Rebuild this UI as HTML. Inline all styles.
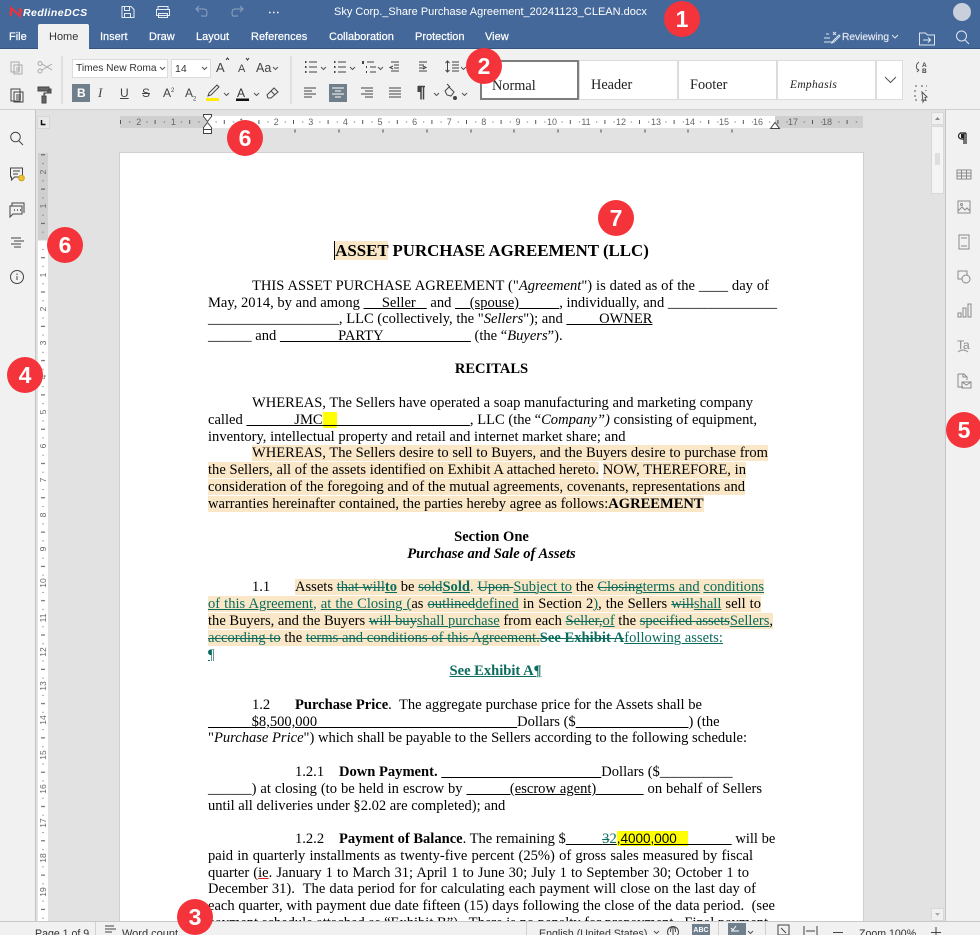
<!DOCTYPE html>
<html><head><meta charset="utf-8"><style>
html,body{margin:0;padding:0}
#a{position:relative;width:980px;height:935px;overflow:hidden;background:#e2e2e2;font-family:"Liberation Sans",sans-serif}
.abs,.t{position:absolute}
.t{white-space:nowrap;line-height:14px}
#top{left:0;top:0;width:980px;height:48px;background:#44689a}
#tb{left:0;top:48px;width:980px;height:62px;background:#f1f1f1;border-top:1px solid #33547f;border-bottom:1px solid #d0d0d0;box-sizing:border-box}
.m{color:#fff;font-size:11px;top:30px;-webkit-text-stroke:.2px #fff}
#ls{left:0;top:110px;width:35px;height:811px;background:#f1f1f1;border-right:1px solid #c4c4c4}
#rs{left:945px;top:110px;width:35px;height:811px;background:#f1f1f1;border-left:1px solid #c4c4c4}
#pg{left:120px;top:153px;width:743px;height:768px;background:#fff;box-shadow:0 0 0 1px #cfcfcf;overflow:hidden}
#st{left:0;top:921px;width:980px;height:14px;background:#f1f1f1;border-top:1px solid #c9c9c9;box-sizing:border-box;font-size:10.6px;color:#333}
.l{position:absolute;white-space:nowrap;font:14.55px/17px "Liberation Serif",serif;color:#000;margin-top:2px}
.j{text-align:justify;text-align-last:justify}
.c{text-align:center;left:88px;width:567px}
.h{background:#f9e7c7}
.k{color:#0b6b5c}
.k s,.k u{text-decoration-thickness:1px}
.y{background:#ffff00}
.bg{position:absolute;width:36px;height:36px;border-radius:50%;background:#f5333a;color:#fff;font:bold 23px/36px "Liberation Sans",sans-serif;text-align:center}
.sty{top:60px;height:40px;box-sizing:border-box;background:#fff;border:1px solid #dcdcdc;font:14.3px/49px "Liberation Serif",serif;padding-left:12px;color:#222;white-space:nowrap}
</style></head><body><div id="a">

<div class="abs" id="top"></div>
<div class="abs" id="tb"></div>
<div class="abs" id="ls"></div>
<div class="abs" id="rs"></div>
<div class="abs" style="left:48px;top:128px;width:72px;height:793px;background:#e2e2e2"></div>

<div class="abs" style="left:38px;top:24px;width:51px;height:25px;background:#f1f1f1;border-radius:2px 2px 0 0"></div>
<div class="t" style="left:23px;top:6px;color:#fff;font:italic bold 10.5px/14px 'Liberation Sans',sans-serif;letter-spacing:.45px">RedlineDCS</div>
<div class="t" style="left:334px;top:5px;color:#fff;font-size:11px">Sky Corp._Share Purchase Agreement_20241123_CLEAN.docx</div>
<div class="t m" style="left:9px">File</div>
<div class="t m" style="left:49px;color:#333;-webkit-text-stroke:0">Home</div>
<div class="t m" style="left:100px">Insert</div>
<div class="t m" style="left:149px">Draw</div>
<div class="t m" style="left:196px">Layout</div>
<div class="t m" style="left:251px">References</div>
<div class="t m" style="left:329px">Collaboration</div>
<div class="t m" style="left:415px">Protection</div>
<div class="t m" style="left:485px">View</div>
<div class="t" style="left:842px;top:31px;color:#dfe6ef;font-size:10.2px;-webkit-text-stroke:.2px #dfe6ef">Reviewing</div>

<!-- font boxes -->
<div class="abs" style="left:72px;top:59px;width:96px;height:19px;background:#fff;border:1px solid #dcdcdc;box-sizing:border-box"></div>
<div class="abs" style="left:171px;top:59px;width:40px;height:19px;background:#fff;border:1px solid #dcdcdc;box-sizing:border-box"></div>
<div class="t" style="left:76px;top:62px;width:81px;overflow:hidden;font-size:10.2px;color:#333">Times New Roman</div>
<div class="t" style="left:175px;top:62px;font-size:10.5px;color:#333">14</div>
<div class="abs" style="left:72px;top:84px;width:18px;height:18px;background:#6f7f8c"></div>
<div class="abs" style="left:329px;top:84px;width:18px;height:18px;background:#6f7f8c"></div>
<div class="t" style="left:77px;top:86px;font-size:12px;font-weight:bold;color:#fff">B</div>
<div class="t" style="left:98px;top:86px;font:italic 13px/14px 'Liberation Serif',serif;color:#444">I</div>
<div class="t" style="left:120px;top:86px;font-size:12px;color:#444;text-decoration:underline">U</div>
<div class="t" style="left:142px;top:86px;font-size:12px;color:#444;text-decoration:line-through">S</div>
<div class="t" style="left:163px;top:86px;font-size:12px;color:#444">A<sup style="font-size:6px;line-height:0">2</sup></div>
<div class="t" style="left:185px;top:86px;font-size:12px;color:#444">A<sub style="font-size:6px;line-height:0">2</sub></div>
<div class="t" style="left:216px;top:61px;font-size:13px;color:#444">A</div>
<div class="t" style="left:238px;top:62px;font-size:11px;color:#444">A</div>
<div class="t" style="left:256px;top:61px;font-size:12.5px;color:#444">Aa</div>
<div class="t" style="left:237px;top:86px;font-size:12px;color:#333">A</div>

<!-- style gallery -->
<div class="abs sty" style="left:480px;width:99px;border:2px solid #7d7d7d;padding-left:10px;line-height:48px">Normal</div>
<div class="abs sty" style="left:579px;width:99px;padding-left:11px">Header</div>
<div class="abs sty" style="left:678px;width:99px;padding-left:11px">Footer</div>
<div class="abs sty" style="left:777px;width:99px;font:italic 11.5px/49px 'Liberation Serif',serif;letter-spacing:.3px">Emphasis</div>
<div class="abs sty" style="left:876px;width:27px"></div>

<!-- page -->
<div class="abs" id="pg">
<div class="l c" style="top:88px;margin-top:0;font:bold 16.87px/19px 'Liberation Serif',serif"><span style="border-left:1px solid #000"></span><span class="h">ASSET</span> PURCHASE AGREEMENT (LLC)</div>

<div class="l j" style="left:132px;top:123px;width:517px">THIS ASSET PURCHASE AGREEMENT ("<i>Agreement</i>") is dated as of the ____ day of</div>
<div class="l j" style="left:88px;top:140px;width:569px">May, 2014, by and among <u>&nbsp;&nbsp;&nbsp;&nbsp;&nbsp;Seller&nbsp;&nbsp;&nbsp;</u> and <u>&nbsp;&nbsp;&nbsp;&nbsp;(spouse)&nbsp;&nbsp;&nbsp;&nbsp;&nbsp;&nbsp;&nbsp;&nbsp;&nbsp;&nbsp;&nbsp;</u>, individually, and _______________</div>
<div class="l" style="left:88px;top:156px">__________________, LLC (collectively, the "<i>Sellers</i>"); and <u>&nbsp;&nbsp;&nbsp;&nbsp;&nbsp;&nbsp;&nbsp;&nbsp;&nbsp;OWNER</u></div>
<div class="l" style="left:88px;top:173px">______ and <u>&nbsp;&nbsp;&nbsp;&nbsp;&nbsp;&nbsp;&nbsp;&nbsp;&nbsp;&nbsp;&nbsp;&nbsp;&nbsp;&nbsp;&nbsp;&nbsp;PARTY&nbsp;&nbsp;&nbsp;&nbsp;&nbsp;&nbsp;&nbsp;&nbsp;&nbsp;&nbsp;&nbsp;&nbsp;&nbsp;&nbsp;&nbsp;&nbsp;&nbsp;&nbsp;&nbsp;&nbsp;&nbsp;&nbsp;&nbsp;&nbsp;</u> (the “<i>Buyers</i>”).</div>
<div class="l c" style="top:206px;font-weight:bold">RECITALS</div>

<div class="l j" style="left:132px;top:240px;width:501px">WHEREAS, The Sellers have operated a soap manufacturing and marketing company</div>
<div class="l j" style="left:88px;top:257px;width:549px">called <u>&nbsp;&nbsp;&nbsp;&nbsp;&nbsp;&nbsp;&nbsp;&nbsp;&nbsp;&nbsp;&nbsp;&nbsp;&nbsp;JMC<span class="y">&nbsp;&nbsp;&nbsp;&nbsp;</span>&nbsp;&nbsp;&nbsp;&nbsp;&nbsp;&nbsp;&nbsp;&nbsp;&nbsp;&nbsp;&nbsp;&nbsp;&nbsp;&nbsp;&nbsp;&nbsp;&nbsp;&nbsp;&nbsp;&nbsp;&nbsp;&nbsp;&nbsp;&nbsp;&nbsp;&nbsp;&nbsp;&nbsp;&nbsp;&nbsp;&nbsp;&nbsp;&nbsp;&nbsp;&nbsp;&nbsp;</u>, LLC (the “<i>Company”)</i> consisting of equipment,</div>
<div class="l" style="left:88px;top:274px">inventory, intellectual property and retail and internet market share; and</div>
<div class="l j" style="left:132px;top:290px;width:516px"><span class="h">WHEREAS, The Sellers desire to sell to Buyers, and the Buyers desire to purchase from</span></div>
<div class="l j" style="left:88px;top:307px;width:538px"><span class="h">the Sellers, all of the assets identified on Exhibit A attached hereto.</span> <span class="h">NOW, THEREFORE, in</span></div>
<div class="l j" style="left:88px;top:324px;width:537px"><span class="h">consideration of the foregoing and of the mutual agreements, covenants, representations and</span></div>
<div class="l" style="left:88px;top:341px"><span class="h">warranties hereinafter contained, the parties hereby agree as follows:<b>AGREEMENT</b></span></div>

<div class="l c" style="top:374px;font-weight:bold">Section One</div>
<div class="l c" style="top:391px;font-weight:bold;font-style:italic">Purchase and Sale of Assets</div>

<div class="l" style="left:132px;top:424px">1.1</div>
<div class="l j" style="left:175px;top:424px;width:469px"><span class="h">Assets <span class="k"><s>that will</s><u><b>to</b></u></span> be <span class="k"><s>sold</s><u><b>Sold</b></u>. <s>Upon </s><u>Subject to</u></span> the <span class="k"><s>Closing</s><u>terms and</u> <u>conditions</u></span></span></div>
<div class="l j" style="left:88px;top:441px;width:553px"><span class="h"><span class="k"><u>of this Agreement</u>, <u>at the Closing (</u></span>as <span class="k"><s>outlined</s><u>defined</u></span> in Section 2<span class="k"><u>)</u></span>, the Sellers <span class="k"><s>will</s><u>shall</u></span> sell to</span></div>
<div class="l j" style="left:88px;top:458px;width:565px"><span class="h">the Buyers, and the Buyers <span class="k"><s>will buy</s><u>shall purchase</u></span> from each <span class="k"><s>Seller,</s><u>of</u></span> the <span class="k"><s>specified assets</s><u>Sellers</u></span>,</span></div>
<div class="l" style="left:88px;top:475px;letter-spacing:.03px"><span class="h"><span class="k"><s>according to</s></span> the <span class="k"><s>terms and conditions of this Agreement.</s></span></span><span class="k"><s><b>See Exhibit A</b></s><u>following assets:</u></span></div>
<div class="l k" style="left:88px;top:492px"><u>¶</u></div>
<div class="l c k" style="top:508px;left:92px;font-weight:bold"><u>See Exhibit A¶</u></div>

<div class="l" style="left:132px;top:542px">1.2</div>
<div class="l j" style="left:175px;top:542px;width:407px"><b>Purchase Price</b>.&nbsp; The aggregate purchase price for the Assets shall be</div>
<div class="l" style="left:88px;top:559px"><u>&nbsp;&nbsp;&nbsp;&nbsp;&nbsp;&nbsp;&nbsp;&nbsp;&nbsp;&nbsp;&nbsp;&nbsp;$8,500,000&nbsp;&nbsp;&nbsp;&nbsp;&nbsp;&nbsp;&nbsp;&nbsp;&nbsp;&nbsp;&nbsp;&nbsp;&nbsp;&nbsp;&nbsp;&nbsp;&nbsp;&nbsp;&nbsp;&nbsp;&nbsp;&nbsp;&nbsp;&nbsp;&nbsp;&nbsp;&nbsp;&nbsp;&nbsp;&nbsp;&nbsp;&nbsp;&nbsp;&nbsp;&nbsp;&nbsp;&nbsp;&nbsp;&nbsp;&nbsp;&nbsp;&nbsp;&nbsp;&nbsp;&nbsp;&nbsp;&nbsp;&nbsp;&nbsp;&nbsp;&nbsp;&nbsp;&nbsp;&nbsp;&nbsp;</u>Dollars ($<u>&nbsp;&nbsp;&nbsp;&nbsp;&nbsp;&nbsp;&nbsp;&nbsp;&nbsp;&nbsp;&nbsp;&nbsp;&nbsp;&nbsp;&nbsp;&nbsp;&nbsp;&nbsp;&nbsp;&nbsp;&nbsp;&nbsp;&nbsp;&nbsp;&nbsp;&nbsp;&nbsp;&nbsp;&nbsp;&nbsp;&nbsp;</u>) (the</div>
<div class="l j" style="left:88px;top:575px;width:539px">"<i>Purchase Price</i>") which shall be payable to the Sellers according to the following schedule:</div>

<div class="l" style="left:175px;top:609px">1.2.1</div>
<div class="l" style="left:219px;top:609px"><b>Down Payment.</b> <u>&nbsp;&nbsp;&nbsp;&nbsp;&nbsp;&nbsp;&nbsp;&nbsp;&nbsp;&nbsp;&nbsp;&nbsp;&nbsp;&nbsp;&nbsp;&nbsp;&nbsp;&nbsp;&nbsp;&nbsp;&nbsp;&nbsp;&nbsp;&nbsp;&nbsp;&nbsp;&nbsp;&nbsp;&nbsp;&nbsp;&nbsp;&nbsp;&nbsp;&nbsp;&nbsp;&nbsp;&nbsp;&nbsp;&nbsp;&nbsp;&nbsp;&nbsp;&nbsp;&nbsp;</u>Dollars ($__________</div>
<div class="l j" style="left:88px;top:626px;width:554px">______) at closing (to be held in escrow by <u>&nbsp;&nbsp;&nbsp;&nbsp;&nbsp;&nbsp;&nbsp;&nbsp;&nbsp;&nbsp;&nbsp;(escrow agent)&nbsp;&nbsp;&nbsp;&nbsp;&nbsp;&nbsp;&nbsp;&nbsp;&nbsp;&nbsp;&nbsp;&nbsp;</u> on behalf of Sellers</div>
<div class="l" style="left:88px;top:643px">until all deliveries under §2.02 are completed); and</div>

<div class="l" style="left:175px;top:676px">1.2.2</div>
<div class="l" style="left:219px;top:676px"><b>Payment of Balance</b>. The remaining $<u>&nbsp;&nbsp;&nbsp;&nbsp;&nbsp;&nbsp;&nbsp;&nbsp;&nbsp;&nbsp;<span class="k"><s>3</s>2</span><span class="y" style="font:13.5px 'Liberation Sans',sans-serif">,4000,000&nbsp;&nbsp;&nbsp;</span>&nbsp;&nbsp;&nbsp;&nbsp;&nbsp;&nbsp;&nbsp;&nbsp;&nbsp;&nbsp;&nbsp;&nbsp;</u> will be</div>
<div class="l j" style="left:88px;top:693px;width:545px">paid in quarterly installments as twenty-five percent (25%) of gross sales measured by fiscal</div>
<div class="l j" style="left:88px;top:710px;width:541px">quarter (<u style="text-decoration-color:#d22">ie</u>. January 1 to March 31; April 1 to June 30; July 1 to September 30; October 1 to</div>
<div class="l j" style="left:88px;top:726px;width:548px">December 31).&nbsp; The data period for for calculating each payment will close on the last day of</div>
<div class="l j" style="left:88px;top:743px;width:567px">each quarter, with payment due date fifteen (15) days following the close of the data period.&nbsp; (see</div>
<div class="l j" style="left:88px;top:760px;width:560px">payment schedule attached as “Exhibit B”).&nbsp; There is no penalty for prepayment.&nbsp; Final payment</div>
</div>

<!-- status bar -->
<div class="abs" id="st">
<div class="t" style="left:35px;top:5px">Page 1 of 9</div>
<div class="t" style="left:122px;top:5px;font-size:11px">Word count</div>
<div class="t" style="left:539px;top:5px">English (United States)</div>
<div class="t" style="left:859px;top:5px">Zoom 100%</div>
</div>

<!-- icons and rulers -->
<svg class="abs" style="left:0;top:0" width="980" height="935" viewBox="0 0 980 935" fill="none" stroke="#555" stroke-width="1">
<defs>
<pattern id="hp" x="207" y="116" width="34.6" height="12" patternUnits="userSpaceOnUse"><path d="M8.6 5.5h1v1h-1zM26 5.5h1v1h-1z" fill="#555" stroke="none"/><path d="M17.3 4v4" stroke="#555"/></pattern>
<pattern id="vp" x="38" y="240.5" width="10" height="34.3" patternUnits="userSpaceOnUse"><path d="M4.5 8.5h1v1h-1zM4.5 25.5h1v1h-1z" fill="#555" stroke="none"/><path d="M3 17.2h4" stroke="#555"/></pattern>
</defs>
<!-- logo -->
<path d="M11 16V8l9 8V8M11 12l-1 2M20 12l2-2" stroke="#f0303a" stroke-width="2"/>
<!-- top icons -->
<g stroke="#e6ecf4"><path d="M122 6.500h9l3 3v8h-12zM124.500 6.500v4h5v-4M124.500 17.500v-4h6v4"/><path d="M158 9.500v-3h10v3M156.500 9.500h13v6h-13zM158.500 13.500h9v4h-9z"/></g>
<g stroke="#8ea3bf"><path d="M196 9h8q3 0 3 4t-3 3h-3M199 6l-3 3 3 3"/><path d="M243 9h-8q-3 0-3 4t3 3h3M240 6l3 3-3 3"/></g>
<path d="M269 12.500h1.500M273 12.500h1.500M277 12.500h1.500" stroke="#fff" stroke-width="1.500"/>
<circle cx="962" cy="12" r="9" fill="#c9d0dc" stroke="none"/>
<g stroke="#dfe6ef"><path d="M824 42h8M824 38h6M826 34h3M833 41l6-6 1 1-6 6-2 1zM833 32l3 3M836 32l-3 3"/><path d="M919.500 33h6l2 2h7v10h-15zM923 40h7M928 37.500l2.500 2.500-2.500 2.500"/><circle cx="961.500" cy="36" r="5"/><path d="M965 40l4 4"/><path d="M892 35l3 3 3-3"/></g>
<!-- clipboard -->
<g stroke="#a9a9a9"><path d="M11 62h8v10h-8zM14 65h8v9h-8zM16 68h4M16 70h4"/><circle cx="40" cy="71" r="2"/><circle cx="40" cy="63.500" r="2"/><path d="M42 64l10 6M42 70l10-6"/></g>
<g stroke="#444"><path d="M11 89h9v12h-9z"/><path d="M14 92h9v10h-9zM16 95h5M16 97h5M16 99h5"/><path d="M38 87h11v4h-11zM49 89h2v4h-7v3M42 96h4v7h-4z" fill="#666"/></g>
<path d="M62 56v48M291 56v48" stroke="#cfcfcf"/>
<!-- chevrons -->
<g stroke="#555"><path d="M160 67l2.500 2.500 2.500-2.500M202 67l2.500 2.500 2.500-2.500M273 67l2.500 2.500 2.500-2.500M321 67l2.500 2.500 2.500-2.500M350 67l2.500 2.500 2.500-2.500M378 67l2.500 2.500 2.500-2.500M461 67l2.500 2.500 2.500-2.500M224 93l2.500 2.500 2.500-2.500M254 93l2.500 2.500 2.500-2.500M434 93l2.500 2.500 2.500-2.500M462 93l2.500 2.500 2.500-2.500"/><path d="M885 77l5.500 5.500 5.500-5.500"/></g>
<path d="M226 60l1.500-2 1.500 2M246 58l1.500 2 1.500-2" stroke="#333"/>
<!-- pen, font color, eraser -->
<path d="M208 96l1-3 8-8 2 2-8 8z" stroke="#444"/><rect x="206" y="98" width="13" height="3" fill="#ffee00" stroke="none"/>
<rect x="236" y="98.500" width="13" height="2.500" fill="#111" stroke="none"/>
<path d="M267 95l7-7 4 4-7 6h-3zM271 91l4 4" stroke="#444"/>
<!-- lists -->
<g stroke="#444"><path d="M309 62h8M309 67h8M309 72h8M338 62h8M338 67h8M338 72h8M367 62h7M370 67h6M370 72h6M391 62h8M394 65h5M394 68h5M391 71h8M419 62h8M419 65h5M419 68h5M419 71h8M452 62h7M452 65h7M452 68h7M452 71h7"/>
<path d="M305 62h1.500M305 67h1.500M305 72h1.500M334 62h1.500M334 67h1.500M334 72h1.500M363 61v3M366 67h1M366 72h1" stroke-width="2"/>
<path d="M393 66l-3 1.500 3 1.500M423 66l3 1.500-3 1.500M447.500 61v11M445.500 63l2-2 2 2M445.500 70l2 2 2-2" />
<path d="M304 88h12M304 91h8M304 94h12M304 97h8M361 88h12M365 91h8M361 94h12M365 97h8M389 88h12M389 91h12M389 94h12M389 97h12"/>
<path d="M332 88h12M335 91h6M332 94h12M335 97h6" stroke="#fff"/>
<path d="M418 86.500h7M423.500 86.500v13M421 86.500v13" stroke="#444" stroke-width="1.500"/><path d="M418 86.500h3v5h-3z" fill="#444"/>
<path d="M445 91l4-4 5 5-3 4-4-1zM447 84l3 3"/><circle cx="455" cy="98" r="1.500" fill="#444"/></g>
<!-- right toolbar icons -->
<g stroke="#555"><path d="M919 62q-4 3-2 7l2 1M917 72l2-2"/><path d="M915 86h2M921 86h2M926 86h1M915 90v2M915 95v2M915 100h2M921 100h1M926 90v1" /><path d="M922 92l5 5-2 .5 1 3-2-.5-1 2z"/></g>
<g fill="#444" stroke="none" font-size="6.500" font-weight="bold" font-family="Liberation Sans,sans-serif"><text x="922" y="67">A</text><text x="922" y="73">B</text></g>
<!-- ruler -->
<rect x="120" y="116" width="743" height="12" fill="#cfcfcf" stroke="none"/>
<rect x="207" y="116" width="568" height="12" fill="#fff" stroke="none"/>
<rect x="120" y="116" width="743" height="12" fill="url(#hp)" stroke="none"/>
<g fill="#666" stroke="none" font-size="9" font-family="Liberation Sans,sans-serif" text-anchor="middle">
<text x="138.800" y="125">2</text><text x="173.400" y="125">1</text><text x="241.600" y="125">1</text><text x="276.200" y="125">2</text><text x="310.800" y="125">3</text><text x="345.400" y="125">4</text><text x="380" y="125">5</text><text x="414.600" y="125">6</text><text x="449.200" y="125">7</text><text x="483.800" y="125">8</text><text x="518" y="125">9</text><text x="552" y="125">10</text><text x="586" y="125">11</text><text x="621" y="125">12</text><text x="656" y="125">13</text><text x="690" y="125">14</text><text x="724" y="125">15</text><text x="758" y="125">16</text><text x="793" y="125">17</text><text x="827" y="125">18</text></g>
<path d="M295 129.500v3M339 129.500v3M383 129.500v3M427 129.500v3M471 129.500v3M514 129.500v3M558 129.500v3M601 129.500v3M645 129.500v3M688 129.500v3M732 129.500v3" stroke="#444"/>
<path d="M203.500 114.500h8v2l-4 5-4-5zM203.500 127.500l4-5 4 5v2h-8zM203.500 129.500h8v4h-8z" fill="#fff" stroke="#444"/>
<path d="M770.500 128.500l4.500-6 4.500 6z" fill="#fff" stroke="#444"/>
<rect x="37.500" y="116.500" width="12" height="12" fill="#e9e9e9" stroke="#d6d6d6"/><path d="M41.500 120v4.500h4" stroke="#111" stroke-width="1.500"/>
<!-- vertical ruler -->
<rect x="38" y="153" width="10" height="768" fill="#fff" stroke="none"/>
<rect x="38" y="153" width="10" height="87.500" fill="#cfcfcf" stroke="none"/>
<rect x="38" y="153" width="10" height="768" fill="url(#vp)" stroke="none"/>
<g fill="#666" stroke="none" font-size="8.500" font-family="Liberation Sans,sans-serif" text-anchor="middle">
<text transform="translate(46 172) rotate(-90)">2</text><text transform="translate(46 206) rotate(-90)">1</text><text transform="translate(46 275) rotate(-90)">1</text><text transform="translate(46 309) rotate(-90)">2</text><text transform="translate(46 343) rotate(-90)">3</text><text transform="translate(46 377) rotate(-90)">4</text><text transform="translate(46 412) rotate(-90)">5</text><text transform="translate(46 446) rotate(-90)">6</text><text transform="translate(46 480) rotate(-90)">7</text><text transform="translate(46 515) rotate(-90)">8</text><text transform="translate(46 549) rotate(-90)">9</text><text transform="translate(46 583) rotate(-90)">10</text><text transform="translate(46 618) rotate(-90)">11</text><text transform="translate(46 652) rotate(-90)">12</text><text transform="translate(46 686) rotate(-90)">13</text><text transform="translate(46 720) rotate(-90)">14</text><text transform="translate(46 755) rotate(-90)">15</text><text transform="translate(46 789) rotate(-90)">16</text><text transform="translate(46 823) rotate(-90)">17</text><text transform="translate(46 858) rotate(-90)">18</text><text transform="translate(46 892) rotate(-90)">19</text></g>
<!-- left sidebar -->
<g stroke="#444"><circle cx="15.500" cy="137" r="4.800"/><path d="M19 141l4 4"/>
<path d="M10.500 168h12v9h-8l-3 3v-3h-1zM13 171h7M13 174h5"/><circle cx="21.500" cy="178" r="2.800" fill="#f4c430" stroke="#c8a020"/>
<path d="M12 206v-3h12v10"/><path d="M10 206h12v8h-9l-3 3z"/><path d="M14 210h1M17 210h1M20 210h1" stroke-width="1.500"/>
<path d="M11 238h10M14 241h10M11 244h10M14 247h7"/>
<circle cx="17" cy="277" r="6.500"/><path d="M17 276v4M17 273.500v1.500"/></g>
<!-- scrollbar -->
<rect x="931.500" y="112.500" width="12" height="12" fill="#f0f0f0" stroke="#d8d8d8"/><path d="M935 120l2.500-3 2.500 3z" fill="#888" stroke="none"/>
<rect x="931.500" y="126.500" width="12" height="67" fill="#f4f4f4" stroke="#d8d8d8"/><path d="M935 154h5M935 156h5M935 158h5M935 160h5M935 162h5M935 164h5" stroke="#c8c8c8"/>
<rect x="931.500" y="908.500" width="12" height="12" fill="#f0f0f0" stroke="#d8d8d8"/><path d="M935 913l2.500 3 2.500-3z" fill="#aaa" stroke="none"/>
<!-- right sidebar -->
<path d="M960 133h6M964 133v11M966 133v11M964 133h-2.500a2.800 2.800 0 0 0 0 6h2.500" stroke="#222" stroke-width="1.200"/><path d="M961 134h3v4h-3z" fill="#222" stroke="none"/>
<g stroke="#8a8a8a"><path d="M957 170h14v9h-14zM957 173h14M957 176h14M961.500 170v9M966.500 170v9"/>
<path d="M958 201h12v12h-12zM958 211l4-4 3 3 2-2 3 3"/><circle cx="961.500" cy="204.500" r="1"/>
<path d="M959 235h10v14h-10zM961 238h6M961 246h6"/>
<path d="M958 271h9v8h-9z"/><circle cx="966" cy="279" r="4" fill="#f1f1f1"/>
<path d="M958 317h3v-4h-3zM963 317h3v-9h-3zM968 317h3v-13h-3z"/>
<path d="M958 352q5-4 10 0"/>
<path d="M958 374h6l3 3v3M958 374v13h5M963 374v3h4M962 382h9v6h-9zM962 382l4.500 3 4.500-3" /></g>
<text x="957" y="349" fill="#8a8a8a" stroke="none" font-size="12" font-family="Liberation Sans,sans-serif">Ta</text>
<!-- statusbar icons -->
<path d="M95.500 922v13M526.500 922v13M765.500 922v13M718.500 922v13" stroke="#d0d0d0"/>
<path d="M105 926h9M105 929h11M105 932h7" stroke="#444"/>
<path d="M654 931l2.500 2.500 2.500-2.500M748 931l2.500 2.500 2.500-2.500" stroke="#555"/>
<circle cx="673" cy="932" r="5.500" stroke="#444"/><path d="M670.500 932q0-5 2.500-5.500q2.500 .5 2.500 5.500M673 926.500v9" stroke="#444"/>
<rect x="692" y="924" width="18" height="11" fill="#6f7f8c" stroke="none"/><text x="701" y="932" fill="#fff" stroke="none" font-size="7" font-weight="bold" font-family="Liberation Sans,sans-serif" text-anchor="middle">ABC</text>
<rect x="728" y="923" width="18" height="12" fill="#6f7f8c" stroke="none"/><path d="M731 931h8M731 928l2 2 3-4" stroke="#fff"/>
<path d="M778 925h11v10h-11zM781 928l5 5" stroke="#444"/>
<path d="M804 926v9M817 926v9M806 931h9" stroke="#444"/>
<path d="M833 932.500h10M931 932.500h10M936 927v8" stroke="#444"/>
</svg>

<div class="bg" style="left:664px;top:1px">1</div>
<div class="bg" style="left:466px;top:48px">2</div>
<div class="bg" style="left:177px;top:899px">3</div>
<div class="bg" style="left:7px;top:357px">4</div>
<div class="bg" style="left:946px;top:412px">5</div>
<div class="bg" style="left:227px;top:120px">6</div>
<div class="bg" style="left:47px;top:227px">6</div>
<div class="bg" style="left:598px;top:200px">7</div>
</div></body></html>
